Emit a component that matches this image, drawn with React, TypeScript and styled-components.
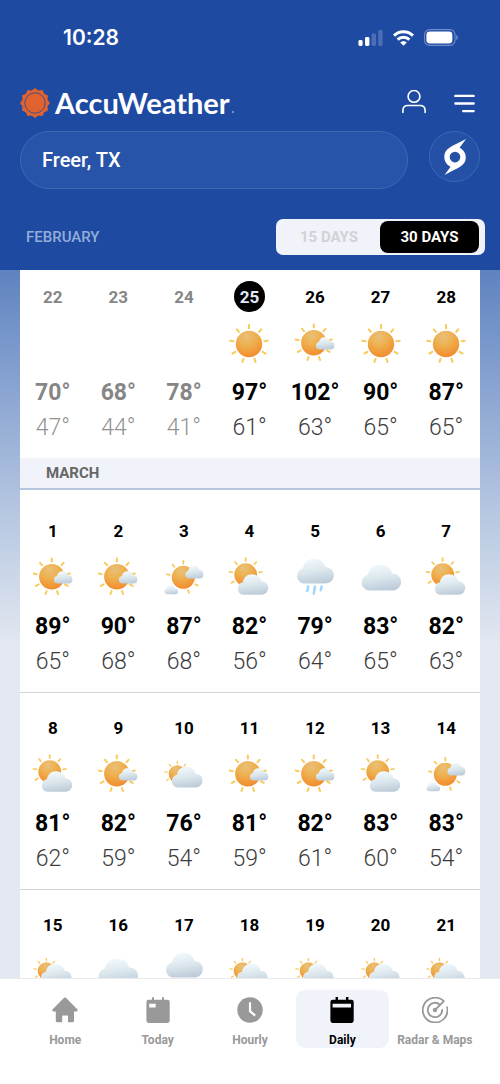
import React, { useId } from "react";
import styled, { createGlobalStyle } from "styled-components";

const GlobalStyle = createGlobalStyle`
  * { box-sizing: border-box; }
  body { margin: 0; font-family: Roboto, "Liberation Sans", sans-serif; background: #e3e8f1; }
  button, input { font: inherit; }
`;

const Screen = styled.div`
  display: flex;
  flex-direction: column;
  height: 100vh;
`;

const Header = styled.header`
  flex: none;
  background: #1e4aa2;
  color: #fff;
`;

const StatusBar = styled.div`
  display: flex;
  align-items: center;
  justify-content: space-between;
  height: 75px;
  padding: 0 42px 0 63px;
`;

const Clock = styled.time`
  font: 600 21px/26px Inter, sans-serif;
`;

const StatusIcons = styled.div`
  display: flex;
  align-items: center;
  gap: 10px;
`;

const BrandBar = styled.div`
  display: flex;
  align-items: center;
  justify-content: space-between;
  height: 56px;
  padding: 0 25px 0 20px;
`;

const Brand = styled.a`
  display: flex;
  align-items: center;
  gap: 5px;
  color: inherit;
  text-decoration: none;
  font: 700 29px/34px Lato, sans-serif;
`;

const BrandMark = styled.span`
  width: 2px;
  height: 2px;
  margin: 18px 0 0 -3px;
  border-radius: 50%;
  background: #8fa8d6;
`;

const Actions = styled.div`
  display: flex;
  align-items: center;
  gap: 28px;
`;

const IconButton = styled.button`
  display: flex;
  padding: 0;
  border: 0;
  background: none;
  color: inherit;
`;

const SearchBar = styled.div`
  display: flex;
  align-items: flex-start;
  gap: 21px;
  padding: 0 20px;
`;

const SearchInput = styled.input`
  flex: 1;
  min-width: 0;
  height: 58px;
  padding: 0 21px;
  border: 1px solid #3d69b4;
  border-radius: 29px;
  background: #2753a8;
  color: #fff;
  font-size: 20px;
  font-weight: 500;
  outline: 0;
`;

const StormButton = styled.button`
  display: grid;
  place-items: center;
  width: 51px;
  height: 51px;
  padding: 0;
  border: 1px solid #3d69b4;
  border-radius: 50%;
  background: #2450a6;
  color: #fff;
`;

const RangeBar = styled.div`
  display: flex;
  align-items: center;
  justify-content: space-between;
  padding: 30px 15px 15px 26px;
`;

const CurrentMonth = styled.h2`
  margin: 0;
  color: #94aed9;
  font-size: 15px;
  font-weight: 500;
`;

const Toggle = styled.div`
  display: flex;
  padding: 2px 6px 2px 2px;
  border-radius: 7px;
  background: #f0f3f9;
`;

const ToggleButton = styled.button<{ $active?: boolean }>`
  width: ${(p) => (p.$active ? 99 : 102)}px;
  height: 32px;
  padding: 0;
  border: 0;
  border-radius: 8px;
  background: ${(p) => (p.$active ? "#000" : "transparent")};
  color: ${(p) => (p.$active ? "#fff" : "#d0d2d6")};
  font-size: 15px;
  font-weight: 700;
`;

const Content = styled.main`
  flex: 1;
  min-height: 0;
  overflow-y: auto;
  scrollbar-width: none;
  padding: 0 20px;
  background: linear-gradient(#5f82c0 0, #86a2d0 110px, #b3c5e0 235px, #e3e8f1 375px);
`;

const Calendar = styled.div`
  background: #fff;
`;

const Week = styled.ol<{ $top: number; $ruled?: boolean }>`
  display: grid;
  grid-template-columns: repeat(7, 1fr);
  margin: 0;
  padding: ${(p) => p.$top}px 1px 13px 0;
  border-bottom: ${(p) => (p.$ruled ? "1px solid #d4d5d8" : "0")};
  list-style: none;
`;

const Day = styled.li`
  display: flex;
  flex-direction: column;
  align-items: center;
`;

const DayNumber = styled.span<{ $past?: boolean; $today?: boolean }>`
  display: grid;
  place-items: center;
  width: 31px;
  height: 31px;
  margin-bottom: 12px;
  border-radius: 50%;
  background: ${(p) => (p.$today ? "#000" : "transparent")};
  color: ${(p) => (p.$today ? "#e3e8f8" : p.$past ? "#868686" : "#000")};
  font-size: 17px;
  font-weight: 700;
`;

const IconSlot = styled.span`
  width: 40px;
  height: 40px;
  margin-bottom: 12px;
  svg { display: block; overflow: visible; }
`;

const High = styled.span<{ $past?: boolean }>`
  color: ${(p) => (p.$past ? "#868686" : "#000")};
  font-size: 23px;
  font-weight: 700;
  line-height: 34px;
`;

const Low = styled.span<{ $past?: boolean }>`
  color: ${(p) => (p.$past ? "#929292" : "#3c3c3c")};
  font-size: 23px;
  font-weight: 300;
  line-height: 35px;
`;

const MonthBar = styled.h2`
  margin: 0;
  padding: 0 26px;
  border-bottom: 2px solid #b5c4df;
  background: #f0f3f9;
  color: #666;
  font-size: 15px;
  font-weight: 700;
  line-height: 30px;
`;

const TabBar = styled.nav`
  display: flex;
  flex: none;
  padding: 11px 19px 36px;
  border-top: 1px solid #ebebed;
  background: #fff;
`;

const Tab = styled.a<{ $active?: boolean }>`
  display: flex;
  flex: 1 1 0;
  min-width: 0;
  flex-direction: column;
  align-items: center;
  gap: 10px;
  padding-top: 7px;
  border-radius: 9px;
  background: ${(p) => (p.$active ? "#f0f3f9" : "transparent")};
  color: ${(p) => (p.$active ? "#000" : "#999")};
  font-size: 12px;
  font-weight: 700;
  line-height: 15px;
  text-decoration: none;
  white-space: nowrap;
`;

type Kind = "sunny" | "mostlySunny" | "hazy" | "partly" | "mostlyCloudy" | "cloudy" | "rain";

const skies: Record<Kind, {
  sun?: [number, number, number];
  rays?: number[];
  clouds: [number, number, number, number][];
}> = {
  sunny: { sun: [20, 20, 13.2], rays: [0, 40, 80, 120, 160, 200, 240, 280, 320], clouds: [] },
  mostlySunny: { sun: [18.8, 18.8, 12.7], rays: [0, 40, 80, 120, 160, 200, 240, 280, 320], clouds: [[20.5, 13.3, 19.2, 12.2]] },
  hazy: { sun: [19.3, 19.3, 11.5], rays: [0, 120, 160, 280, 320], clouds: [[21, 7.7, 18.7, 12.7], [0, 27.3, 14.3, 9]] },
  partly: { sun: [16.7, 16.7, 11.4], rays: [0, 40, 80, 240, 280, 320], clouds: [[8.3, 16.3, 31.4, 20.4]] },
  mostlyCloudy: { sun: [13.4, 19, 8.7], rays: [0, 40, 240, 280, 320], clouds: [[7.3, 11.4, 31.7, 21]] },
  cloudy: { clouds: [[-0.3, 6.4, 41, 26]] },
  rain: { clouds: [[1.2, 0.4, 38.2, 25]] },
};

const WeatherIcon = ({ kind }: { kind: Kind }) => {
  const id = useId();
  const { sun, rays = [], clouds } = skies[kind];
  return (
    <svg width="40" height="40" viewBox="0 0 40 40" aria-hidden="true">
      <defs>
        <radialGradient id={`${id}s`} cx="0.42" cy="0.22" r="0.75">
          <stop offset="0" stopColor="#e9c07a" />
          <stop offset="0.45" stopColor="#eeb150" />
          <stop offset="1" stopColor="#f28e30" />
        </radialGradient>
        <linearGradient id={`${id}c`} x1="0.4" y1="0" x2="0.6" y2="1">
          <stop offset="0" stopColor="#f1fafd" />
          <stop offset="0.5" stopColor="#dce7ed" />
          <stop offset="1" stopColor="#bccbd9" />
        </linearGradient>
      </defs>
      {sun && (
        <g transform={`translate(${sun[0]} ${sun[1]})`}>
          {rays.map((a) => (
            <line
              key={a}
              y1={-sun[2] * 1.2}
              y2={-sun[2] * 1.44}
              stroke="#f8cc5c"
              strokeWidth={sun[2] * 0.16}
              strokeLinecap="round"
              transform={`rotate(${a})`}
            />
          ))}
          <circle r={sun[2]} fill={`url(#${id}s)`} />
        </g>
      )}
      {clouds.map(([x, y, w, h]) => (
        <path
          key={x}
          transform={`translate(${x} ${y}) scale(${w / 41} ${h / 26})`}
          d="M7.8 26A8 8 0 0 1 7.4 10.2C8 4.5 13 0 19 0C25.3 0 30.6 3.9 31.3 9A8.5 8.5 0 0 1 32.5 26Z"
          fill={`url(#${id}c)`}
        />
      ))}
      {kind === "rain" && (
        <g stroke="#a3d7fa" strokeWidth="2.6" strokeLinecap="round">
          <path d="M13.2 28.6L12.3 33" />
          <path d="M20 28.6L18.8 35.6" />
          <path d="M26.6 28.6L25.8 32.2" />
        </g>
      )}
    </svg>
  );
};

const spikes = Array.from({ length: 24 }, (_, i) => {
  const a = (i * Math.PI) / 12;
  const r = i % 2 ? 13 : 15;
  return `${15 + r * Math.sin(a)},${15 - r * Math.cos(a)}`;
}).join(" ");

const BrandSun = () => (
  <svg width="30" height="30" viewBox="0 0 30 30" aria-hidden="true">
    <polygon points={spikes} fill="#e0622e" />
    <circle cx="15" cy="15" r="10.2" fill="#e0622e" stroke="#1e4aa2" strokeWidth="0.8" />
  </svg>
);

type DayData = [day: number, kind: Kind | null, high?: number, low?: number];

const february: DayData[] = [
  [22, null, 70, 47], [23, null, 68, 44], [24, null, 78, 41], [25, "sunny", 97, 61],
  [26, "mostlySunny", 102, 63], [27, "sunny", 90, 65], [28, "sunny", 87, 65],
];

const march: DayData[][] = [
  [
    [1, "mostlySunny", 89, 65], [2, "mostlySunny", 90, 68], [3, "hazy", 87, 68], [4, "partly", 82, 56],
    [5, "rain", 79, 64], [6, "cloudy", 83, 65], [7, "partly", 82, 63],
  ],
  [
    [8, "partly", 81, 62], [9, "mostlySunny", 82, 59], [10, "mostlyCloudy", 76, 54], [11, "mostlySunny", 81, 59],
    [12, "mostlySunny", 82, 61], [13, "partly", 83, 60], [14, "hazy", 83, 54],
  ],
  [
    [15, "mostlyCloudy"], [16, "cloudy"], [17, "rain"], [18, "mostlyCloudy"],
    [19, "mostlyCloudy"], [20, "mostlyCloudy"], [21, "mostlyCloudy"],
  ],
];

const WeekRow = ({ days, top, ruled, today }: { days: DayData[]; top: number; ruled?: boolean; today?: number }) => (
  <Week $top={top} $ruled={ruled}>
    {days.map(([day, kind, high, low]) => (
      <Day key={day}>
        <DayNumber $past={!kind} $today={day === today}>{day}</DayNumber>
        <IconSlot>{kind && <WeatherIcon kind={kind} />}</IconSlot>
        {high !== undefined && <High $past={!kind}>{high}°</High>}
        {low !== undefined && <Low $past={!kind}>{low}°</Low>}
      </Day>
    ))}
  </Week>
);

const tabs = [
  {
    label: "Home",
    icon: <path fill="currentColor" d="M12.1.8Q13 0 13.9.8L25.3 12.2Q26.3 13.6 24.8 14.4H22V23.8Q22 25.3 20.5 25.3H16V19Q16 18.4 15.4 18.4H10.8Q10.2 18.4 10.2 19V25.3H5.2Q3.8 25.3 3.8 23.8V14.4H1.2Q-.3 13.6.7 12.2Z" />,
  },
  {
    label: "Today",
    icon: (
      <path fill="currentColor" fillRule="evenodd" d="M7 2.7V1Q7 0 8 0T9 1V2.7H17V1Q17 0 18 0T19 1V2.7H22.5Q24.7 2.7 24.7 5V23.6Q24.7 26 22.5 26H3.6Q1.4 26 1.4 23.6V5Q1.4 2.7 3.6 2.7ZM4.2 6.7V10.5H10.7V6.7Z" />
    ),
  },
  {
    label: "Hourly",
    icon: (
      <>
        <circle cx="13" cy="13" r="12.8" fill="currentColor" />
        <path d="M13 5.3V14.2L18.2 18.7" fill="none" stroke="#fff" strokeWidth="2.2" />
      </>
    ),
  },
  {
    label: "Daily",
    active: true,
    icon: (
      <path fill="currentColor" fillRule="evenodd" d="M6.6 2.7V0H9V2.7H17V0H19.4V2.7H22.5Q24.7 2.7 24.7 5V23.6Q24.7 26 22.5 26H3.6Q1.4 26 1.4 23.6V5Q1.4 2.7 3.6 2.7ZM3.6 6.7V10.4H22V6.7Z" />
    ),
  },
  {
    label: "Radar & Maps",
    icon: (
      <g fill="none" stroke="currentColor" strokeWidth="1.8">
        <path d="M21.8 4.2A12.4 12.4 0 1 0 25.2 10.2" strokeLinecap="round" />
        <path d="M18 7.8A7.2 7.2 0 1 0 20.2 13" strokeLinecap="round" />
        <path d="M13 13L21.8 4.2" />
        <circle cx="13" cy="13" r="2.2" fill="currentColor" stroke="none" />
      </g>
    ),
  },
];

export default function App() {
  return (
    <Screen>
      <GlobalStyle />
      <Header>
        <StatusBar>
          <Clock>10:28</Clock>
          <StatusIcons>
            <svg width="25" height="16" viewBox="0 0 25 16" fill="#fff" aria-hidden="true">
              <rect x="0.4" y="10" width="4.2" height="6" rx="1.4" />
              <rect x="7" y="7" width="4.4" height="9" rx="1.4" />
              <rect x="13.6" y="3.6" width="4.4" height="12.4" rx="1.4" opacity=".2" />
              <rect x="20.2" y="0" width="4.4" height="16" rx="1.4" opacity=".2" />
            </svg>
            <svg width="21" height="16" viewBox="0 0 21 16" aria-hidden="true">
              <g fill="none" stroke="#fff" strokeWidth="3">
                <path d="M1 5.6A13.6 13.6 0 0 1 20 5.6" />
                <path d="M4.6 9.6A8.5 8.5 0 0 1 16.4 9.6" />
              </g>
              <path d="M10.5 15.8L7.2 12.6A4.8 4.8 0 0 1 13.8 12.6Z" fill="#fff" />
            </svg>
            <svg width="34" height="17" viewBox="0 0 34 17" aria-hidden="true">
              <rect x=".6" y=".6" width="30.4" height="15.8" rx="5" fill="none" stroke="#6f8dc7" strokeWidth="1.1" />
              <rect x="2.4" y="2.6" width="26" height="11.8" rx="3.4" fill="#fff" />
              <path d="M32.2 6Q34 6.6 34 8.5T32.2 11Z" fill="#6f8dc7" />
            </svg>
          </StatusIcons>
        </StatusBar>
        <BrandBar>
          <Brand href="#">
            <BrandSun />
            AccuWeather
            <BrandMark />
          </Brand>
          <Actions>
            <IconButton aria-label="Account">
              <svg width="24" height="26" viewBox="0 0 24 26" fill="none" stroke="#fff" strokeWidth="1.6" strokeLinecap="round" aria-hidden="true">
                <circle cx="12" cy="6.4" r="5.9" />
                <path d="M.9 22.4V20.6Q.9 15.5 6 15.5H18Q23.1 15.5 23.1 20.6V22.4" />
              </svg>
            </IconButton>
            <IconButton aria-label="Menu">
              <svg width="21" height="19" viewBox="0 0 21 19" fill="none" stroke="#fff" strokeWidth="2.4" strokeLinecap="round" aria-hidden="true">
                <path d="M1.4 1.9H19.6M1.4 9.5H19.6M9.2 17.1H19.6" />
              </svg>
            </IconButton>
          </Actions>
        </BrandBar>
        <SearchBar>
          <SearchInput aria-label="Location" defaultValue="Freer, TX" />
          <StormButton aria-label="Hurricane tracker">
            <svg width="22" height="36" viewBox="-11 -18 22 36" aria-hidden="true">
              <path
                fill="currentColor"
                fillRule="evenodd"
                d="M11-18L4.6-9.3C8.4-7.5 10.8-4 10.8.5C10.8 9 3 10.5-10.5 18L-4.4 9.7C-8.2 7.8-10.7 4.2-10.7 0C-10.7-9-3-10.5 11-18ZM0-5.2A5.3 5.3 0 1 0 0 5.4A5.3 5.3 0 1 0 0-5.2Z"
              />
            </svg>
          </StormButton>
        </SearchBar>
        <RangeBar>
          <CurrentMonth>FEBRUARY</CurrentMonth>
          <Toggle>
            <ToggleButton aria-pressed="false">15 DAYS</ToggleButton>
            <ToggleButton $active aria-pressed="true">30 DAYS</ToggleButton>
          </Toggle>
        </RangeBar>
      </Header>
      <Content>
        <Calendar>
          <WeekRow days={february} top={11} today={25} />
          <MonthBar>MARCH</MonthBar>
          {march.map((week, i) => (
            <WeekRow key={i} days={week} top={i === 0 ? 25 : 19} ruled />
          ))}
        </Calendar>
      </Content>
      <TabBar>
        {tabs.map((t) => (
          <Tab key={t.label} href="#" $active={t.active} aria-current={t.active ? "page" : undefined}>
            <svg width="26" height="26" viewBox="0 0 26 26" aria-hidden="true">{t.icon}</svg>
            {t.label}
          </Tab>
        ))}
      </TabBar>
    </Screen>
  );
}
